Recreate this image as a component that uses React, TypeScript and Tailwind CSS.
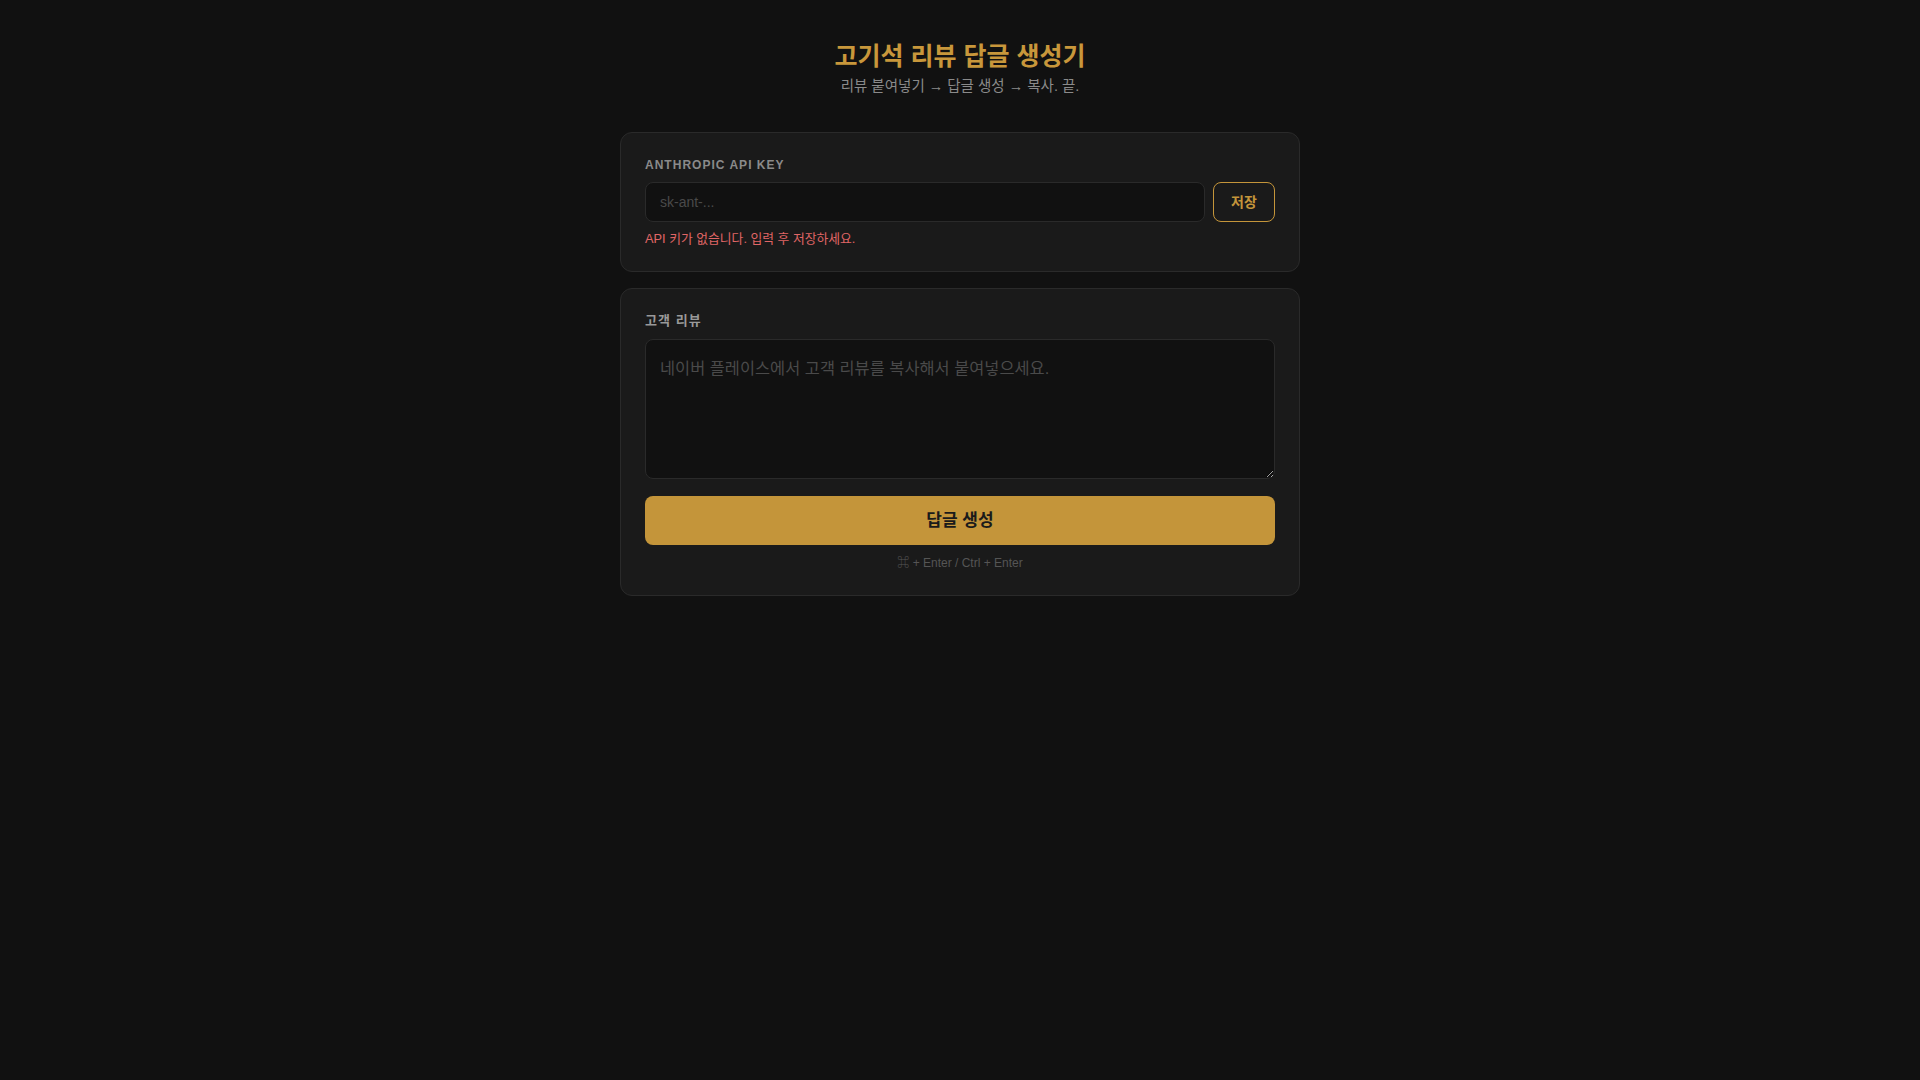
import { useState } from 'react'

const font = { fontFamily: '"Liberation Sans", "Noto Sans CJK KR", sans-serif' }

const ApiKeyCard = () => {
  const [apiKey, setApiKey] = useState('')

  return (
    <div className="rounded-xl border border-[#2a2a2a] bg-[#1a1a1a] p-6">
      <label className="mb-[9px] block text-xs font-bold uppercase leading-4 tracking-[0.085em] text-[#8a8a8a]">
        Anthropic API Key
      </label>
      <div className="flex gap-2">
        <input
          type="password"
          value={apiKey}
          onChange={(e) => setApiKey(e.target.value)}
          placeholder="sk-ant-..."
          className="h-10 flex-1 rounded-lg border border-[#2a2a2a] bg-[#111111] px-3.5 text-sm text-[#e5e5e5] outline-none placeholder:text-[#4a4a4a]"
          style={font}
        />
        <button
          className="h-10 w-[62px] rounded-lg border border-[#c4953a] bg-transparent text-sm font-bold text-[#c4953a]"
          style={font}
        >
          저장
        </button>
      </div>
      <p className="mt-[9px] text-[12.8px] leading-4 text-[#e06666]">API 키가 없습니다. 입력 후 저장하세요.</p>
    </div>
  )
}

const ReviewCard = () => {
  const [review, setReview] = useState('')

  return (
    <div className="rounded-xl border border-[#2a2a2a] bg-[#1a1a1a] p-6">
      <label className="mb-2.5 block text-[13px] font-bold leading-4 tracking-[0.08em] text-[#999999]">
        고객 리뷰
      </label>
      <textarea
        value={review}
        onChange={(e) => setReview(e.target.value)}
        placeholder="네이버 플레이스에서 고객 리뷰를 복사해서 붙여넣으세요."
        className="block h-[140px] w-full resize-y rounded-lg border border-[#2a2a2a] bg-[#111111] px-3.5 pt-4 pb-3.5 text-[16.4px] leading-6 text-[#e5e5e5] outline-none placeholder:text-[#4a4a4a]"
        style={font}
      />
      <button
        className="mt-[17px] h-[49px] w-full rounded-lg bg-[#c4953a] text-[17px] font-bold text-[#1a1a1a]"
        style={font}
      >
        답글 생성
      </button>
      <p className="mt-2.5 text-center text-xs leading-4 text-[#555555]">⌘ + Enter / Ctrl + Enter</p>
    </div>
  )
}

const App = () => {
  return (
    <div className="min-h-screen bg-[#111111] px-4 pt-10 pb-10" style={font}>
      <div className="mx-auto w-full max-w-[680px]">
        <header className="mb-9 text-center">
          <h1 className="text-[25px] font-bold leading-8 text-[#c8973b]">고기석 리뷰 답글 생성기</h1>
          <p className="mt-1 text-[14.5px] leading-5 text-[#8a8a8a]">리뷰 붙여넣기 → 답글 생성 → 복사. 끝.</p>
        </header>
        <div className="flex flex-col gap-4">
          <ApiKeyCard />
          <ReviewCard />
        </div>
      </div>
    </div>
  )
}

export default App
